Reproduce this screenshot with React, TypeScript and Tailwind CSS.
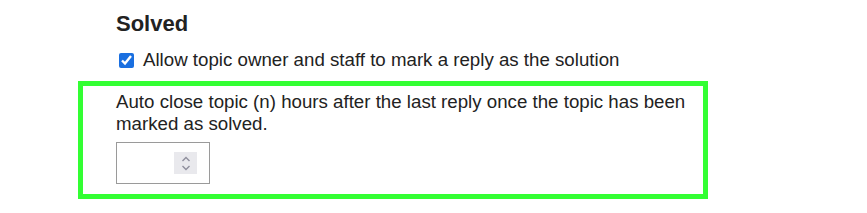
import { useState } from 'react'

function NumberField() {
  const [value, setValue] = useState('')
  return (
    <div className="flex items-center w-[94px] h-[42px] border border-[#9a9a9a] bg-white">
      <input
        type="text"
        value={value}
        onChange={e => setValue(e.target.value)}
        className="w-0 flex-1 h-full px-2 bg-transparent outline-none text-[18.7px]"
      />
      <div className="flex flex-col items-center justify-center gap-[3px] w-[23px] h-[22px] mr-[12px] bg-[#e9e9ed]">
        <svg width="10" height="6" viewBox="0 0 10 6" fill="none">
          <path d="M1.5 5 L5 1.5 L8.5 5" stroke="#8f8f9d" strokeWidth="1.4" />
        </svg>
        <svg width="10" height="6" viewBox="0 0 10 6" fill="none">
          <path d="M1.5 1 L5 4.5 L8.5 1" stroke="#8f8f9d" strokeWidth="1.4" />
        </svg>
      </div>
    </div>
  )
}

export default function App() {
  return (
    <div className="w-[867px] h-[213px] bg-white text-[#222] font-['Liberation_Sans',Arial,sans-serif]">
      <div className="pt-[10px] pl-[116px]">
        <h3 className="text-[22px] font-bold leading-[28px]">Solved</h3>
        <label className="flex items-center gap-[9px] mt-[11px] text-[18.7px] leading-[22px] pl-[3px]">
          <input type="checkbox" defaultChecked className="w-[15px] h-[15px] m-0 accent-[#1a6fe0]" />
          Allow topic owner and staff to mark a reply as the solution
        </label>
      </div>
      {/* highlighted setting */}
      <div className="ml-[78px] mt-[10px] w-[630px] h-[118px] border-[5px] border-[#33ff33] pl-[33px] pr-[10px] pt-[5px]">
        <p className="text-[18.7px] leading-[22px]">
          Auto close topic (n) hours after the last reply once the topic has been marked as solved.
        </p>
        <div className="mt-[7px]">
          <NumberField />
        </div>
      </div>
    </div>
  )
}
